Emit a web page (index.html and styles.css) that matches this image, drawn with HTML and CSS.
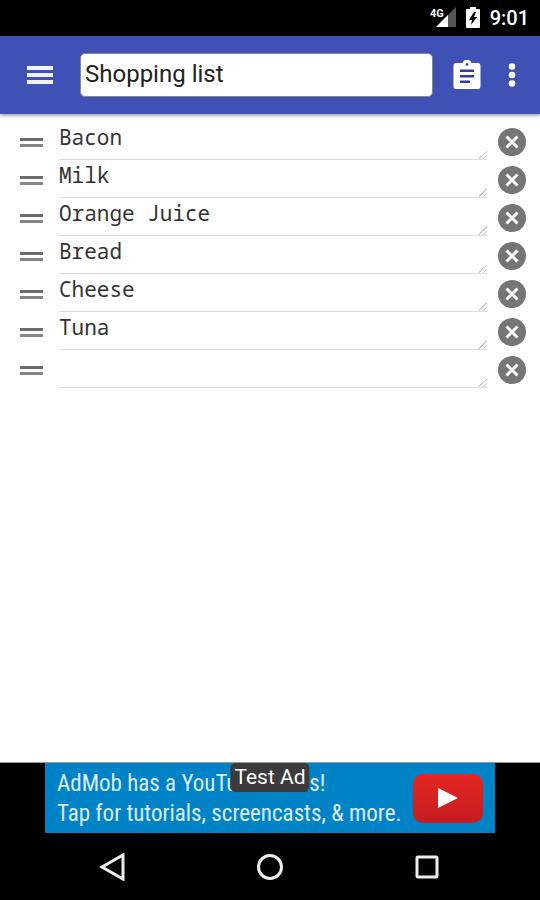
FILE: index.html
```
<!DOCTYPE html>
<html lang="en">
<head>
    <meta charset="UTF-8">
    <meta name="viewport" content="width=device-width, initial-scale=1.0">
    <title>Shopping list</title>
    <link rel="stylesheet" href="styles.css">
</head>
<body>
    <div class="status-bar">
        <svg class="signal-icon" width="26" height="22" viewBox="0 0 26 22">
            <path d="M26 0v20H6z" fill="#555"/>
            <path d="M18 8v12H6z" fill="#fff"/>
            <text x="0" y="10">4G</text>
        </svg>
        <svg width="14" height="22" viewBox="0 0 14 22">
            <path d="M4 0h6v2h3q1 0 1 1v17q0 1-1 1H1q-1 0-1-1V3q0-1 1-1h3z" fill="#fff"/>
            <path d="M8 5l-5 8h3l-1 5 6-8H8l2-5z" fill="#000"/>
        </svg>
        <span class="clock">9:01</span>
    </div>

    <header class="toolbar">
        <button class="icon-button menu-button" aria-label="Menu">
            <svg width="26" height="20" viewBox="0 0 26 20" fill="#f2f3ff">
                <path d="M0 1h26v4H0zM0 8h26v4H0zM0 15h26v4H0z"/>
            </svg>
        </button>
        <input class="title-input" type="text" value="Shopping list" aria-label="List title">
        <button class="icon-button" aria-label="Paste">
            <svg width="28" height="30" viewBox="0 0 28 30">
                <path d="M3 3h6.500a4.700 4.700 0 0 1 9 0H25q2.500 0 2.500 2.500v21Q27.500 29 25 29H3Q.5 29 .5 26.500v-21Q.5 3 3 3z" fill="#fff"/>
                <path d="M7 9.500h14v2.600H7zM7 15h14v2.600H7zM7 20.500h10v2.600H7z" fill="#303f9f"/>
                <circle cx="14" cy="4.500" r="1.300" fill="#303f9f"/>
            </svg>
        </button>
        <button class="icon-button more-button" aria-label="More options">
            <svg width="8" height="24" viewBox="0 0 8 24" fill="#fff">
                <circle cx="4" cy="3.500" r="3.300"/>
                <circle cx="4" cy="12" r="3.300"/>
                <circle cx="4" cy="20.500" r="3.300"/>
            </svg>
        </button>
    </header>

    <svg class="sprite">
        <symbol id="icon-remove" viewBox="0 0 28 28">
            <circle cx="14" cy="14" r="14" fill="#757575"/>
            <path d="M8.500 8.500l11 11M19.500 8.500l-11 11" stroke="#fff" stroke-width="3"/>
        </symbol>
    </svg>

    <main>
        <ul class="item-list">
            <li class="item">
                <span class="drag-handle"></span>
                <textarea rows="1" aria-label="Item 1">Bacon</textarea>
                <button class="icon-button" aria-label="Remove Bacon"><svg width="28" height="28"><use href="#icon-remove"/></svg></button>
            </li>
            <li class="item">
                <span class="drag-handle"></span>
                <textarea rows="1" aria-label="Item 2">Milk</textarea>
                <button class="icon-button" aria-label="Remove Milk"><svg width="28" height="28"><use href="#icon-remove"/></svg></button>
            </li>
            <li class="item">
                <span class="drag-handle"></span>
                <textarea rows="1" aria-label="Item 3">Orange Juice</textarea>
                <button class="icon-button" aria-label="Remove Orange Juice"><svg width="28" height="28"><use href="#icon-remove"/></svg></button>
            </li>
            <li class="item">
                <span class="drag-handle"></span>
                <textarea rows="1" aria-label="Item 4">Bread</textarea>
                <button class="icon-button" aria-label="Remove Bread"><svg width="28" height="28"><use href="#icon-remove"/></svg></button>
            </li>
            <li class="item">
                <span class="drag-handle"></span>
                <textarea rows="1" aria-label="Item 5">Cheese</textarea>
                <button class="icon-button" aria-label="Remove Cheese"><svg width="28" height="28"><use href="#icon-remove"/></svg></button>
            </li>
            <li class="item">
                <span class="drag-handle"></span>
                <textarea rows="1" aria-label="Item 6">Tuna</textarea>
                <button class="icon-button" aria-label="Remove Tuna"><svg width="28" height="28"><use href="#icon-remove"/></svg></button>
            </li>
            <li class="item">
                <span class="drag-handle"></span>
                <textarea rows="1" aria-label="Item 7"></textarea>
                <button class="icon-button" aria-label="Remove empty item"><svg width="28" height="28"><use href="#icon-remove"/></svg></button>
            </li>
        </ul>
    </main>

    <div class="ad-bar">
        <a class="ad" href="#">
            <span class="ad-text">AdMob has a YouTube series!<br>Tap for tutorials, screencasts, &amp; more.</span>
            <span class="play"><svg width="20" height="20" viewBox="0 0 20 20"><path d="M0 0l20 10L0 20z" fill="#fff"/></svg></span>
            <span class="ad-badge">Test Ad</span>
        </a>
    </div>

    <nav class="nav-bar">
        <button class="icon-button" aria-label="Back">
            <svg width="28" height="28" viewBox="0 0 28 28"><path d="M24 2v24L3 14z"/></svg>
        </button>
        <button class="icon-button" aria-label="Home">
            <svg width="28" height="28" viewBox="0 0 28 28"><circle cx="14" cy="14" r="11.500"/></svg>
        </button>
        <button class="icon-button" aria-label="Recent apps">
            <svg width="28" height="28" viewBox="0 0 28 28"><rect x="4" y="4" width="20" height="20" rx="1"/></svg>
        </button>
    </nav>
</body>
</html>
```
FILE: styles.css
```
* {
    margin: 0;
    padding: 0;
    box-sizing: border-box;
}

body {
    display: flex;
    flex-direction: column;
    min-height: 100vh;
    font-family: Roboto, "Liberation Sans", sans-serif;
    background: #fff;
    color: #212121;
}

svg {
    display: block;
}

.sprite {
    display: none;
}

.icon-button {
    flex: none;
    background: none;
    border: none;
    cursor: pointer;
}

.status-bar {
    display: flex;
    align-items: center;
    justify-content: flex-end;
    gap: 10px;
    height: 36px;
    padding: 0 11px;
    background: #000;
    color: #fff;
}

.signal-icon text {
    font-size: 11px;
    font-weight: 700;
    fill: #fff;
}

.clock {
    font-size: 20px;
    font-weight: 500;
}

.toolbar {
    display: flex;
    align-items: center;
    height: 78px;
    padding: 0 24px 0 27px;
    background: #3f51b5;
    box-shadow: 0 1px 4px rgba(0, 0, 0, 0.5);
}

.menu-button {
    margin-right: 27px;
}

.more-button {
    margin-left: 27px;
}

.title-input {
    flex: 1;
    min-width: 0;
    height: 44px;
    margin-right: 20px;
    padding: 0 4px 3px;
    border: 1px solid #888;
    border-radius: 5px;
    background: #fff;
    color: #212121;
    font: 24px Roboto, "Liberation Sans", sans-serif;
}

main {
    flex: 1;
}

.item-list {
    list-style: none;
    padding: 9px 14px 9px 20px;
}

.item {
    display: flex;
    align-items: center;
    height: 38px;
}

.drag-handle {
    flex: none;
    width: 23px;
    height: 9px;
    margin-right: 16px;
    border-top: 3px solid #6c6c6c;
    border-bottom: 3px solid #858585;
}

.item textarea {
    flex: 1;
    min-width: 0;
    height: 36px;
    margin-right: 11px;
    border: none;
    border-bottom: 1px solid #ddd;
    background: none;
    color: #333;
    font: 21px/26px "Noto Sans Mono", "DejaVu Sans Mono", monospace;
    overflow: hidden;
    resize: vertical;
}

.item textarea::-webkit-resizer {
    background: linear-gradient(135deg, transparent 70%, #ccc 70%, #ccc 75%, transparent 75%, transparent 85%, #ccc 85%, #ccc 90%, transparent 90%);
}

.ad-bar {
    display: flex;
    justify-content: center;
    background: #000;
    border-top: 1px solid #999;
}

.ad {
    position: relative;
    display: flex;
    align-items: center;
    justify-content: space-between;
    width: 450px;
    height: 70px;
    padding: 0 12px;
    background: #0083c6;
    color: #dcecfa;
    text-decoration: none;
}

.ad-text {
    padding-top: 2px;
    font: 23px/30px "Roboto Condensed", "Liberation Sans Narrow", Roboto, sans-serif;
    white-space: nowrap;
}

.play {
    flex: none;
    display: flex;
    align-items: center;
    justify-content: center;
    width: 70px;
    height: 49px;
    border-radius: 10px;
    background: linear-gradient(#e62623, #c31c1f);
}

.ad-badge {
    position: absolute;
    top: 0;
    left: 50%;
    transform: translateX(-50%);
    padding: 0 4px;
    border-radius: 5px;
    background: #3b3b3b;
    color: #fff;
    font-size: 21px;
    line-height: 29px;
    white-space: nowrap;
}

.nav-bar {
    display: flex;
    justify-content: center;
    gap: 129px;
    padding: 20px 0 19px;
    background: #000;
    fill: none;
    stroke: #eee;
    stroke-width: 3;
}
```
